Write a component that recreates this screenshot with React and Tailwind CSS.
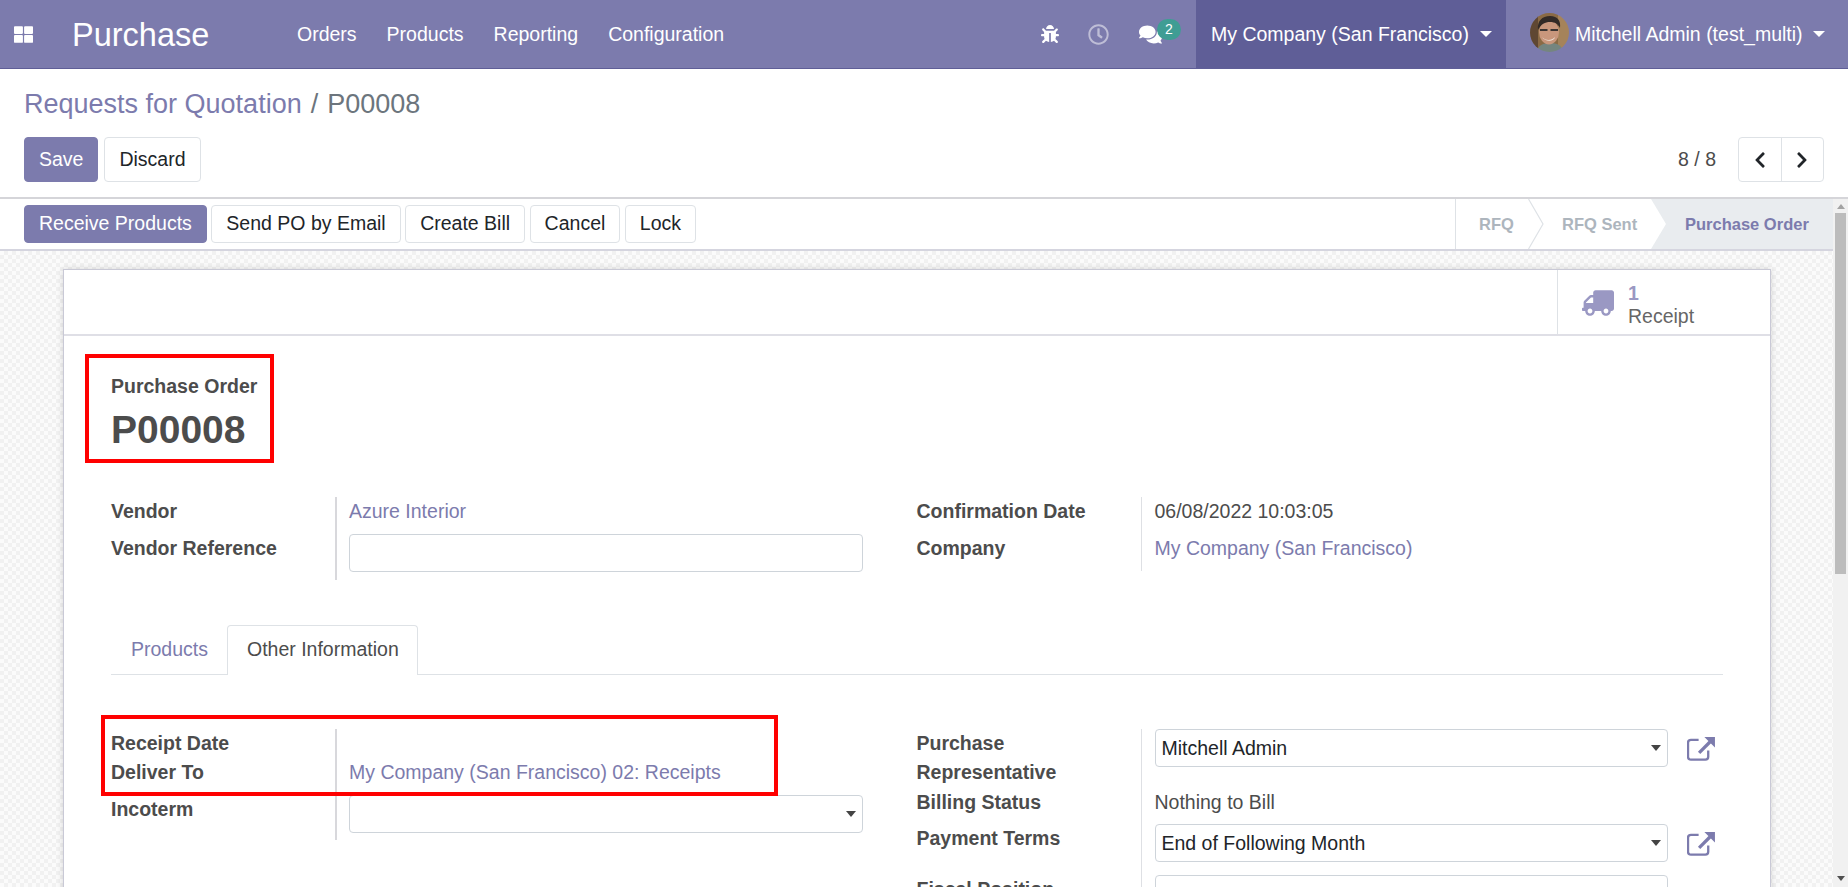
import React from 'react';
import { FaBug, FaRegClock, FaComments, FaTruck, FaThLarge, FaChevronLeft, FaChevronRight } from 'react-icons/fa';

const Caret = ({ className }) => (
    <span className={`inline-block w-0 h-0 border-x-[6px] border-x-transparent border-t-[6px] border-t-white ${className || ''}`} />
);

const Avatar = () => (
    <svg width="39" height="39" viewBox="0 0 39 39" className="shrink-0 -mt-[5px]">
        <defs>
            <clipPath id="av"><circle cx="19.5" cy="19.5" r="19.5" /></clipPath>
            <filter id="soft"><feGaussianBlur stdDeviation="0.7" /></filter>
        </defs>
        <g clipPath="url(#av)">
            <g filter="url(#soft)">
                <rect width="39" height="39" fill="#8a6b45" />
                <rect x="28" width="11" height="39" fill="#a5835a" />
                <rect width="8" height="39" fill="#5f4630" />
                <path d="M7 39c1-7 6-9 13-9s12 2 13 9z" fill="#74857f" />
                <ellipse cx="19" cy="19" rx="10" ry="12.5" fill="#c9977c" />
                <path d="M8 17C7 8 12 3 20 3s11 5 10 12c-2-4-5-6-10-6s-9 2-12 8z" fill="#332a26" />
                <path d="M10 17h7.5M20.5 17H28" stroke="#3b3430" strokeWidth="2" />
                <path d="M12 24c3 4 10 4 13 0-1 5-10 5-13 0z" fill="#f1e8df" />
            </g>
        </g>
    </svg>
);

const ExternalLink = () => (
    <svg width="29" height="25" viewBox="0 0 30 26" className="shrink-0 ml-[19px] mt-[7px]" fill="none">
        <path d="M22 15v6.5a3 3 0 0 1-3 3H4a3 3 0 0 1-3-3V7a3 3 0 0 1 3-3h8" stroke="#7c7bad" strokeWidth="2.4" />
        <path d="M12.5 17.5 24 6" stroke="#7c7bad" strokeWidth="3.4" />
        <polygon points="18,1 29,1 29,12" fill="#7c7bad" />
    </svg>
);

const Button = ({ primary, children, className }) => (
    <button
        className={`rounded-[4px] border px-[14px] text-[19.5px] ${primary ? 'bg-[#7c7bad] border-[#7c7bad] text-white' : 'bg-white border-[#dee2e6] text-[#212529]'} ${className || ''}`}
    >
        {children}
    </button>
);

const Field = ({ label, labelWidth = 'w-[224px]', sep = 'border-l-2 border-[#d8d8dc] pl-[12px]', height, children }) => (
    <div className={`flex ${height}`}>
        <div className={`${labelWidth} shrink-0 font-bold text-[#4c4c4c] leading-[29px]`}>{label}</div>
        <div className={`flex-1 ${sep} leading-[29px]`}>{children}</div>
    </div>
);

const RightField = ({ label, height, children }) => (
    <Field label={label} sep="border-l border-[#dee0e4] pl-[13px]" height={height}>
        {children}
    </Field>
);

const Select = ({ value, height = 'h-[38px]' }) => (
    <div className={`relative flex-1 ${height}`}>
        <select
            defaultValue={value}
            className={`appearance-none w-full ${height} bg-white border border-[#ced4da] rounded-[4px] pl-[6px] text-[19.5px] text-[#212529] outline-none`}
        >
            <option value={value}>{value}</option>
        </select>
        <span className="absolute right-[7px] top-1/2 -translate-y-1/2 w-0 h-0 border-x-[5px] border-x-transparent border-t-[6px] border-t-[#444] pointer-events-none" />
    </div>
);

const Link = ({ children }) => <a className="text-[#7c7bad]">{children}</a>;

const App = () => {
    return (
        <div className="h-[887px] w-[1848px] overflow-hidden bg-white flex flex-col font-['Liberation_Sans',Arial,sans-serif] text-[19.5px] text-[#4c4c4c]">
            {/* Top navbar */}
            <header className="h-[69px] shrink-0 bg-[#7c7bad] border-b border-[#5f5e97] flex items-stretch text-white">
                <div className="w-[72px] flex items-center pl-[14px]">
                    <FaThLarge size={19} />
                </div>
                <div className="w-[225px] flex items-center pt-[2px] text-[32.5px]">Purchase</div>
                <nav className="flex items-center pt-[2px] gap-[30px]">
                    <span>Orders</span>
                    <span>Products</span>
                    <span>Reporting</span>
                    <span>Configuration</span>
                </nav>
                <div className="ml-auto flex items-stretch">
                    <div className="flex items-center">
                        <FaBug size={18} className="mr-[29px]" />
                        <FaRegClock size={21} className="mr-[30px] opacity-50" />
                        <div className="relative mr-[34px]">
                            <FaComments size={23} />
                            <span className="absolute left-[18px] -top-[4px] w-[24px] h-[21px] rounded-full bg-[#3f9d94] text-[14px] leading-[21px] text-center">2</span>
                        </div>
                    </div>
                    <div className="w-[310px] bg-[#5f5e97] flex items-center pt-[2px] pl-[15px]">
                        <span>My Company (San Francisco)</span>
                        <Caret className="ml-[11px] -mt-[2px]" />
                    </div>
                    <div className="w-[342px] flex items-center pt-[2px] pl-[24px]">
                        <Avatar />
                        <span className="ml-[6px]">Mitchell Admin (test_multi)</span>
                        <Caret className="ml-[10px] -mt-[2px]" />
                    </div>
                </div>
            </header>

            {/* Control panel */}
            <div className="h-[130px] shrink-0 border-b-2 border-[#d5d5d9] px-[24px] pt-[15px]">
                <div className="flex items-center h-[40px] text-[27px] leading-[40px]">
                    <span className="text-[#7c7bad]">Requests for Quotation</span>
                    <span className="mx-[9px] text-[#6c757d]">/</span>
                    <span className="text-[#6c757d]">P00008</span>
                </div>
                <div className="flex items-stretch h-[45px] mt-[13px]">
                    <Button primary className="mr-[6px]">Save</Button>
                    <Button>Discard</Button>
                    <span className="ml-auto mr-[22px] self-center">8 / 8</span>
                    <div className="flex w-[86px] border border-[#dee2e6] rounded-[4px] text-[#212529]">
                        <div className="flex-1 flex items-center justify-center border-r border-[#dee2e6]"><FaChevronLeft size={18} /></div>
                        <div className="flex-1 flex items-center justify-center"><FaChevronRight size={18} /></div>
                    </div>
                </div>
            </div>

            <div className="flex-1 flex min-h-0">
                <div className="flex-1 min-w-0 flex flex-col overflow-hidden">
                    {/* Action buttons and statusbar */}
                    <div className="h-[52px] shrink-0 border-b-2 border-[#d5d5df] flex items-start pl-[24px]">
                        <div className="flex gap-[4.5px] h-[38px] mt-[6px]">
                            <Button primary>Receive Products</Button>
                            <Button>Send PO by Email</Button>
                            <Button>Create Bill</Button>
                            <Button>Cancel</Button>
                            <Button>Lock</Button>
                        </div>
                        <div className="ml-auto flex h-[50px] text-[16.5px] font-bold text-[#adb5bd] leading-[50px]">
                            <div className="w-[73px] border-l border-[#dee2e6] pl-[23px]">RFQ</div>
                            <div className="relative w-[123px] pl-[34px]">
                                <svg width="16" height="50" viewBox="0 0 16 50" className="absolute left-0 top-0" fill="none">
                                    <path d="M0.5 0 15 25 0.5 50" stroke="#dee2e6" strokeWidth="1.2" />
                                </svg>
                                RFQ Sent
                            </div>
                            <div className="relative w-[182px] pl-[34px] bg-[#e9ecef] text-[#7c7bad]">
                                <svg width="16" height="50" viewBox="0 0 16 50" className="absolute left-0 top-0">
                                    <polygon points="0,0 15,25 0,50" fill="#fff" />
                                </svg>
                                Purchase Order
                            </div>
                        </div>
                    </div>

                    {/* Sheet background */}
                    <div className="flex-1 min-h-0 pt-[18px] pl-[63px] bg-[#fbfbfb] bg-[repeating-conic-gradient(#f1f1f1_0_25%,#fbfbfb_0_50%)] bg-[length:8px_8px]">
                        <div className="relative w-[1708px] h-[800px] bg-white border border-[#c9c9d6] shadow-[0_0_7px_rgba(0,0,0,0.15)]">
                            <div className="h-[66px] border-b-2 border-[#dfdfe6] flex justify-end">
                                <div className="w-[213px] border-l border-[#dee2e6] flex items-center pl-[24px]">
                                    <FaTruck size={32} className="-scale-x-100 text-[#9a98c3] mt-[2px]" />
                                    <div className="ml-[14px] pt-[3px]">
                                        <div className="font-bold text-[#9a98c3] leading-[24px] mt-[1px]">1</div>
                                        <div className="text-[#666] leading-[23px]">Receipt</div>
                                    </div>
                                </div>
                            </div>

                            <div className="px-[47px] pt-[36px]">
                                <div className="font-bold leading-[29px] text-[#4c4c4c]">Purchase Order</div>
                                <div className="font-bold text-[39px] leading-[47px] mt-[5px]">P00008</div>

                                <div className="grid grid-cols-2 mt-[44px]">
                                    <div className="pr-[54px]">
                                        <Field label="Vendor" height="h-[37px]"><Link>Azure Interior</Link></Field>
                                        <Field label="Vendor Reference" height="h-[46px]">
                                            <input className="block w-full h-[38px] border border-[#ced4da] rounded-[4px] outline-none" />
                                        </Field>
                                    </div>
                                    <div className="-ml-[0.5px]">
                                        <RightField label="Confirmation Date" height="h-[37px]">06/08/2022 10:03:05</RightField>
                                        <RightField label="Company" height="h-[37px]"><Link>My Company (San Francisco)</Link></RightField>
                                    </div>
                                </div>

                                {/* Tabs */}
                                <div className="flex h-[50px] mt-[45px] border-b border-[#dee2e6]">
                                    <div className="w-[116px] pl-[20px] leading-[49px] text-[#7c7bad]">Products</div>
                                    <div className="h-[50px] pl-[19px] pr-[18px] leading-[47px] bg-white border border-b-0 border-[#dee2e6] rounded-t-[4px] text-[#4c4c4c]">Other Information</div>
                                </div>

                                <div className="grid grid-cols-2 mt-[54px]">
                                    <div className="pr-[54px]">
                                        <Field label="Receipt Date" height="h-[29px]" />
                                        <Field label="Deliver To" height="h-[37px]"><Link>My Company (San Francisco) 02: Receipts</Link></Field>
                                        <Field label="Incoterm" height="h-[45px]">
                                            <div className="flex"><Select value="" /></div>
                                        </Field>
                                    </div>
                                    <div className="-ml-[0.5px] pr-[7px]">
                                        <RightField label="Purchase Representative" height="h-[59px]">
                                            <div className="flex items-start"><Select value="Mitchell Admin" /><ExternalLink /></div>
                                        </RightField>
                                        <RightField label="Billing Status" height="h-[36px]">Nothing to Bill</RightField>
                                        <RightField label="Payment Terms" height="h-[51px]">
                                            <div className="flex items-start"><Select value="End of Following Month" /><ExternalLink /></div>
                                        </RightField>
                                        <RightField label="Fiscal Position" height="h-[46px]">
                                            <div className="flex items-start"><Select value="" /><span className="w-[48px]" /></div>
                                        </RightField>
                                    </div>
                                </div>
                            </div>

                            {/* Annotation boxes */}
                            <div className="absolute left-[21px] top-[84px] w-[189px] h-[109px] border-[4px] border-[#ff0000] pointer-events-none" />
                            <div className="absolute left-[37px] top-[445px] w-[677px] h-[81px] border-[4px] border-[#ff0000] pointer-events-none" />
                        </div>
                    </div>
                </div>

                {/* Scrollbar */}
                <div className="w-[15px] shrink-0 bg-[#f1f1f1] flex flex-col items-center">
                    <span className="mt-[5px] w-0 h-0 border-x-[4px] border-x-transparent border-b-[5px] border-b-[#a3a3a3]" />
                    <div className="w-[11px] h-[361px] mt-[4px] bg-[#bcbcbc]" />
                    <span className="mt-auto mb-[6px] w-0 h-0 border-x-[4px] border-x-transparent border-t-[5px] border-t-[#505050]" />
                </div>
            </div>
        </div>
    );
};

export default App;
